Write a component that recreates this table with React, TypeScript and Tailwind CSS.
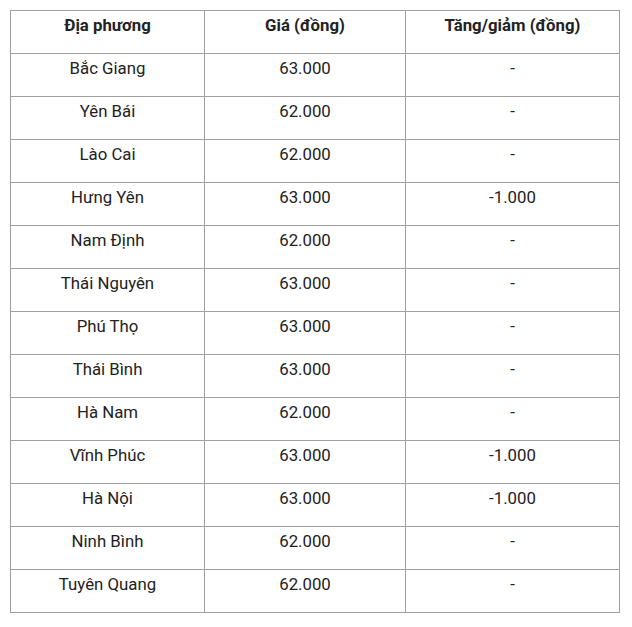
const ROWS = [
  ["Bắc Giang", "63.000", "-"],
  ["Yên Bái", "62.000", "-"],
  ["Lào Cai", "62.000", "-"],
  ["Hưng Yên", "63.000", "-1.000"],
  ["Nam Định", "62.000", "-"],
  ["Thái Nguyên", "63.000", "-"],
  ["Phú Thọ", "63.000", "-"],
  ["Thái Bình", "63.000", "-"],
  ["Hà Nam", "62.000", "-"],
  ["Vĩnh Phúc", "63.000", "-1.000"],
  ["Hà Nội", "63.000", "-1.000"],
  ["Ninh Bình", "62.000", "-"],
  ["Tuyên Quang", "62.000", "-"],
];

const HEADERS = ["Địa phương", "Giá (đồng)", "Tăng/giảm (đồng)"];
const COLS = ["w-[194px]", "w-[201px]", "w-[214px]"];

export default function App() {
  return (
    <div className="w-[632px] h-[627px] bg-white pt-[10px] pl-[10px] font-['Roboto',sans-serif] text-[16.8px] leading-[24px] text-[#222222]">
      <div className="inline-flex flex-col border-l border-t border-[#a0a0a0]">
        <div className="flex">
          {HEADERS.map((h, i) => (
            <div key={h} className={`${COLS[i]} h-[43px] border-r border-b border-[#a0a0a0] pt-[2px] text-center font-bold`}>
              {h}
            </div>
          ))}
        </div>
        {ROWS.map((row) => (
          <div key={row[0]} className="flex">
            {row.map((cell, i) => (
              <div key={i} className={`${COLS[i]} h-[43px] border-r border-b border-[#a0a0a0] pt-[2px] text-center`}>
                {cell}
              </div>
            ))}
          </div>
        ))}
      </div>
    </div>
  );
}
